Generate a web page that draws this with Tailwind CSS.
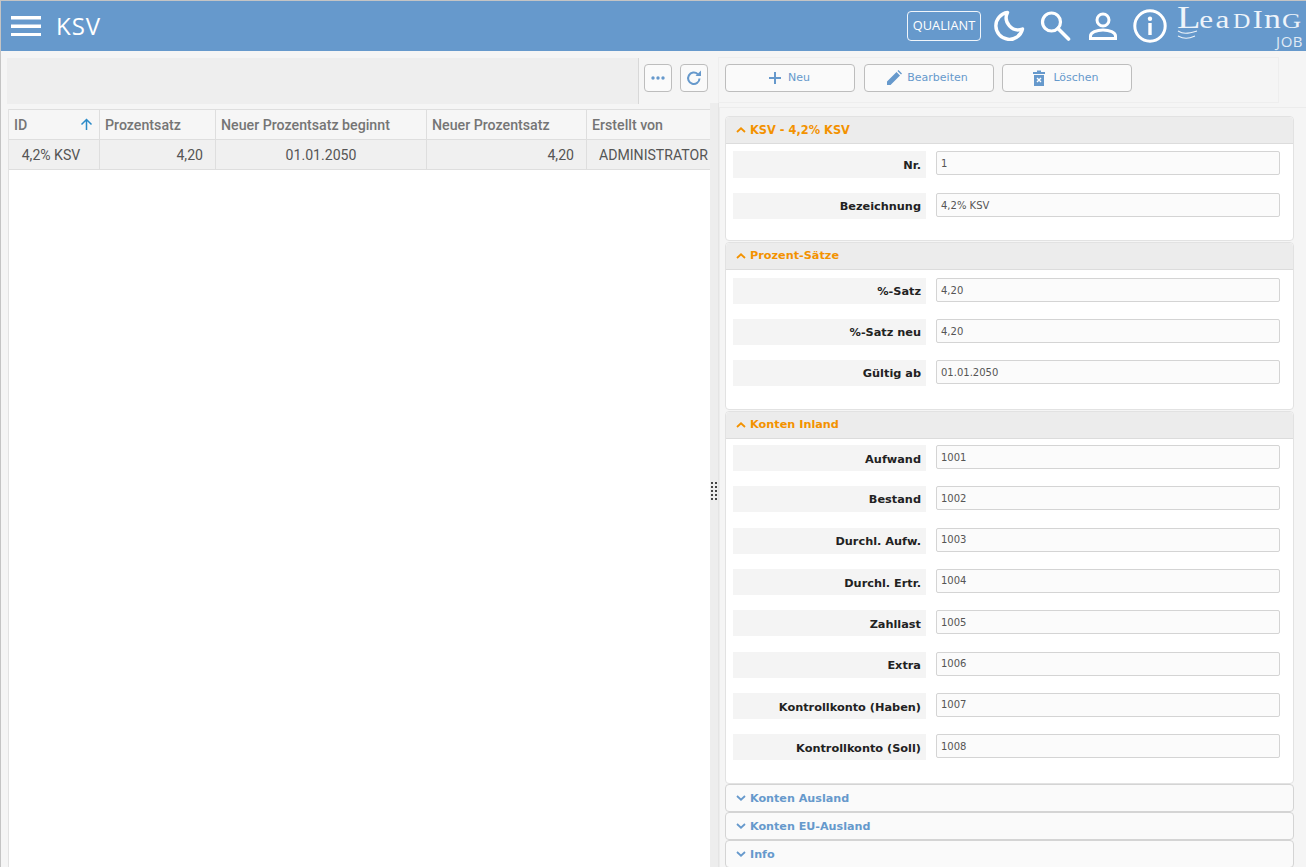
<!DOCTYPE html>
<html lang="de">
<head>
<meta charset="utf-8">
<title>KSV</title>
<script src="https://cdn.jsdelivr.net/npm/@tailwindcss/browser@4"></script>
</head>
<body class="m-0 overflow-hidden bg-white">
<div class="flex h-[867px] w-[1306px] flex-col overflow-hidden border-t border-l border-[#c4c4c4] bg-[#f5f5f5] font-['Roboto',sans-serif]">
  <!-- Header -->
  <header class="flex h-[50px] shrink-0 items-center bg-[#6699cc] text-white">
    <svg class="ml-[10px] shrink-0" width="30" height="20" viewBox="0 0 30 20"><path d="M0 0h30v3.400H0zM0 8.500h30v3.400H0zM0 17h30v3.400H0z" fill="#fff"/></svg>
    <span class="ml-[15px] font-['Open_Sans',sans-serif] text-[24px] leading-none tracking-[1px]">KSV</span>
    <div class="ml-auto flex items-center">
      <div class="flex h-[30px] w-[74px] items-center justify-center rounded-[4px] border border-white/90 font-['Open_Sans',sans-serif] text-[12.800px] font-medium">QUALIANT</div>
      <svg class="ml-[12px]" width="32" height="32" viewBox="0 0 32 32"><path d="M14.500 2.500A13.500 13.500 0 1 0 29.500 19 12 12 0 0 1 14.500 2.500Z" fill="none" stroke="#fff" stroke-width="3.400" stroke-linejoin="round"/></svg>
      <svg class="ml-[14px]" width="32" height="32" viewBox="0 0 32 32"><circle cx="12.500" cy="12" r="9" fill="none" stroke="#fff" stroke-width="3.200"/><path d="M19 18.500 29.500 29" stroke="#fff" stroke-width="3.600" stroke-linecap="round"/></svg>
      <svg class="ml-[17px]" width="30" height="32" viewBox="0 0 30 32"><circle cx="15" cy="10" r="6" fill="none" stroke="#fff" stroke-width="3"/><path d="M2.500 28.500v-2.500c0-3.500 6-6 12.500-6s12.500 2.500 12.500 6v2.500Z" fill="none" stroke="#fff" stroke-width="3"/></svg>
      <svg class="ml-[14px]" width="36" height="36" viewBox="0 0 36 36"><circle cx="18" cy="18" r="15.200" fill="none" stroke="#fff" stroke-width="3"/><circle cx="18" cy="10.800" r="2.200" fill="#fff"/><rect x="16.300" y="15" width="3.400" height="12" fill="#fff"/></svg>
      <div class="relative ml-[9px] h-[44px] w-[127px] font-['Liberation_Serif',serif] text-[#eef4fa]">
        <div class="absolute left-0 top-[-5px] flex h-[36px] origin-left scale-x-[1.2] items-baseline whitespace-nowrap leading-[36px]">
          <span class="text-[32px]">L</span><span class="-ml-[1px] text-[26px]">e</span><span class="ml-[2px] text-[26px]">a</span><span class="ml-[3px] text-[20px]">D</span><span class="ml-[2px] text-[25px]">I</span><span class="ml-[1px] text-[28px]">n</span><span class="ml-[1px] text-[22px]">G</span>
        </div>
        <svg class="absolute left-0 top-[25px]" width="22" height="11" viewBox="0 0 22 11"><path d="M1 2c5 3 9 3 19 0M1 7c6 3 10 3 17 0" fill="none" stroke="#eef4fa" stroke-width="1.100"/></svg>
        <span class="absolute right-[1px] top-[33px] h-[8px] font-['Open_Sans',sans-serif] text-[15px] leading-[8px] tracking-[0.5px] opacity-90">JOB</span>
      </div>
      <div class="w-[2px]"></div>
    </div>
  </header>

  <div class="flex min-h-0 flex-1">
    <!-- Left pane -->
    <section class="flex w-[709px] shrink-0 flex-col pl-[6px] pt-[7px]">
      <div class="flex h-[46px] w-[703px] shrink-0">
        <div class="w-[632px] border-r border-[#d8d8d8] bg-[#eeeeee]"></div>
        <div class="flex w-[71px] items-start gap-[8px] bg-[#f5f5f5] pl-[5px] pt-[6px]">
          <button class="flex h-[28px] w-[28px] items-center justify-center rounded-[4px] border border-[#bdbdbd] bg-[#fafafa]">
            <svg width="14" height="4" viewBox="0 0 14 4"><circle cx="2" cy="2" r="1.700" fill="#6699cc"/><circle cx="7" cy="2" r="1.700" fill="#6699cc"/><circle cx="12" cy="2" r="1.700" fill="#6699cc"/></svg>
          </button>
          <button class="flex h-[28px] w-[28px] items-center justify-center rounded-[4px] border border-[#bdbdbd] bg-[#fafafa]">
            <svg width="16" height="16" viewBox="0 0 16 16"><path d="M13.500 8.500a5.700 5.700 0 1 1-1.700-4.300" fill="none" stroke="#6699cc" stroke-width="2"/><path d="M9.500 6h5.500V.5Z" fill="#6699cc"/></svg>
          </button>
        </div>
      </div>
      <div class="mt-[5px] ml-[1px] flex-1 overflow-hidden border-l border-[#e2e2e2] bg-white text-[14.100px]">
        <div class="flex h-[31px] border-y border-[#dedede] bg-[#f6f6f6] text-[14.200px] font-medium text-[#757575]">
          <div class="flex w-[91px] shrink-0 items-center justify-between border-r border-[#dedede] pl-[5px] pr-[6px] pt-[2px]">
            <span>ID</span>
            <svg class="-mt-[2px]" width="13" height="13" viewBox="0 0 13 13"><path d="M6.500 12V1.500M1.500 6.500l5-5 5 5" fill="none" stroke="#2a8ac8" stroke-width="1.500"/></svg>
          </div>
          <div class="flex w-[116px] shrink-0 items-center border-r border-[#dedede] pl-[5px] pt-[2px]">Prozentsatz</div>
          <div class="flex w-[211px] shrink-0 items-center border-r border-[#dedede] pl-[5px] pt-[2px]">Neuer Prozentsatz beginnt</div>
          <div class="flex w-[160px] shrink-0 items-center border-r border-[#dedede] pl-[5px] pt-[2px]">Neuer Prozentsatz</div>
          <div class="flex flex-1 items-center pl-[5px] pt-[2px]">Erstellt von</div>
        </div>
        <div class="flex h-[30px] border-b border-[#dedede] bg-[#f0f0f0] text-[#555555]">
          <div class="flex w-[91px] shrink-0 items-center justify-center border-r border-[#dedede] pr-[6px] pt-[2px]">4,2% KSV</div>
          <div class="flex w-[116px] shrink-0 items-center justify-end border-r border-[#dedede] pr-[12px] pt-[2px]">4,20</div>
          <div class="flex w-[211px] shrink-0 items-center justify-center border-r border-[#dedede] pt-[2px]">01.01.2050</div>
          <div class="flex w-[160px] shrink-0 items-center justify-end border-r border-[#dedede] pr-[12px] pt-[2px]">4,20</div>
          <div class="flex flex-1 items-center overflow-hidden whitespace-nowrap pl-[12px] pt-[2px]">ADMINISTRATOR</div>
        </div>
      </div>
    </section>

    <!-- Splitter -->
    <div class="mt-[52px] flex w-[9px] shrink-0 items-center justify-center border-r border-[#e4e4e4] bg-[#ededed]">
      <svg class="mt-[12px] ml-[1px]" width="7" height="19" viewBox="0 0 7 19"><path d="M0 0h2v2H0zM4 0h2v2H4zM0 4h2v2H0zM4 4h2v2H4zM0 8h2v2H0zM4 8h2v2H4zM0 12h2v2H0zM4 12h2v2H4zM0 16h2v2H0zM4 16h2v2H4z" fill="#444"/></svg>
    </div>

    <!-- Right pane -->
    <section class="-ml-[1px] flex min-w-0 flex-1 flex-col pt-[6px] font-['DejaVu_Sans',sans-serif]">
      <div class="flex h-[46px] w-[561px] shrink-0 items-start gap-[9px] border border-[#eeeeee] pl-[6px] pt-[6px] text-[11px] text-[#6699cc]">
        <button class="flex h-[28px] w-[130px] items-center justify-center gap-[6px] rounded-[4px] border border-[#bdbdbd] bg-[#fafafa] pr-[2px]">
          <svg width="14" height="14" viewBox="0 0 14 14"><path d="M6 1h2v5h5v2H8v5H6V8H1V6h5Z" fill="#6699cc"/></svg>
          <span class="pt-[1px]">Neu</span>
        </button>
        <button class="flex h-[28px] w-[130px] items-center justify-center gap-[5px] rounded-[4px] border border-[#bdbdbd] bg-[#fafafa] pr-[4px]">
          <svg width="16" height="16" viewBox="0 0 16 16"><path d="M1 15v-3.500L10.500 2l3.500 3.500L4.500 15ZM11.500 1l1-1 3.500 3.500-1 1Z" fill="#6699cc"/></svg>
          <span class="pt-[1px]">Bearbeiten</span>
        </button>
        <button class="-ml-[1px] flex h-[28px] w-[130px] items-center justify-center gap-[8px] rounded-[4px] border border-[#bdbdbd] bg-[#fafafa] pr-[2px]">
          <svg width="12" height="16" viewBox="0 0 12 16"><path d="M0 2h4V.5h4V2h4v2H0ZM1 5h10v11H1Z" fill="#6699cc"/><path d="m4 8 4 4M8 8l-4 4" stroke="#fff" stroke-width="1.400"/></svg>
          <span class="pt-[1px]">Löschen</span>
        </button>
      </div>

      <div class="mt-[4px] ml-[1px] flex-1 overflow-hidden border-t border-l border-[#ececec] pl-[5px] pt-[8px] text-[11.300px]">
        <!-- Panel 1 -->
        <div class="w-[569px] rounded-[4px] border border-[#e2e2e2] bg-white">
          <div class="flex h-[27px] items-center gap-[4px] rounded-t-[4px] border-b border-[#dcdcdc] bg-[#ececec] pl-[10px] text-[11.400px] font-bold text-[#f39200]">
            <svg width="10" height="6" viewBox="0 0 10 6"><path d="M1 5 5 1.300 9 5" fill="none" stroke="#f39200" stroke-width="1.800"/></svg>
            <span class="pt-[1px]">KSV - 4,2% KSV</span>
          </div>
          <div class="h-[96px] pt-[7px]">
            <div class="flex h-[27px] pl-[7px]">
              <div class="flex h-[27px] w-[193px] items-center justify-end bg-[#f4f4f4] pr-[5px] pt-[4px] font-bold text-[#222222]">Nr.</div>
              <div class="ml-[10px] flex h-[24px] w-[344px] items-center rounded-[2px] border border-[#d4d4d4] bg-[#fbfbfb] pl-[4px] text-[10px] text-[#555555]">1</div>
            </div>
            <div class="mt-[15px] flex h-[26px] pl-[7px]">
              <div class="flex h-[26px] w-[193px] items-center justify-end bg-[#f4f4f4] pr-[5px] pt-[3px] font-bold text-[#222222]">Bezeichnung</div>
              <div class="ml-[10px] flex h-[24px] w-[344px] items-center rounded-[2px] border border-[#d4d4d4] bg-[#fbfbfb] pl-[4px] text-[10px] text-[#555555]">4,2% KSV</div>
            </div>
          </div>
        </div>
        <!-- Panel 2 -->
        <div class="mt-[1px] w-[569px] rounded-[4px] border border-[#e2e2e2] bg-white">
          <div class="flex h-[27px] items-center gap-[4px] rounded-t-[4px] border-b border-[#dcdcdc] bg-[#ececec] pl-[10px] text-[11.250px] font-bold text-[#f39200]">
            <svg width="10" height="6" viewBox="0 0 10 6"><path d="M1 5 5 1.300 9 5" fill="none" stroke="#f39200" stroke-width="1.800"/></svg>
            <span class="pt-[1px]">Prozent-Sätze</span>
          </div>
          <div class="h-[139px] pt-[8px]">
            <div class="mb-[15px] flex h-[26px] pl-[7px]">
              <div class="flex h-[26px] w-[193px] items-center justify-end bg-[#f4f4f4] pr-[5px] pt-[3px] font-bold text-[#222222]">%-Satz</div>
              <div class="ml-[10px] flex h-[24px] w-[344px] items-center rounded-[2px] border border-[#d4d4d4] bg-[#fbfbfb] pl-[4px] text-[10px] text-[#555555]">4,20</div>
            </div>
            <div class="mb-[15px] flex h-[26px] pl-[7px]">
              <div class="flex h-[26px] w-[193px] items-center justify-end bg-[#f4f4f4] pr-[5px] pt-[3px] font-bold text-[#222222]">%-Satz neu</div>
              <div class="ml-[10px] flex h-[24px] w-[344px] items-center rounded-[2px] border border-[#d4d4d4] bg-[#fbfbfb] pl-[4px] text-[10px] text-[#555555]">4,20</div>
            </div>
            <div class="flex h-[26px] pl-[7px]">
              <div class="flex h-[26px] w-[193px] items-center justify-end bg-[#f4f4f4] pr-[5px] pt-[3px] font-bold text-[#222222]">Gültig ab</div>
              <div class="ml-[10px] flex h-[24px] w-[344px] items-center rounded-[2px] border border-[#d4d4d4] bg-[#fbfbfb] pl-[4px] text-[10px] text-[#555555]">01.01.2050</div>
            </div>
          </div>
        </div>
        <!-- Panel 3 -->
        <div class="mt-[1px] w-[569px] rounded-[4px] border border-[#e2e2e2] bg-white">
          <div class="flex h-[27px] items-center gap-[4px] rounded-t-[4px] border-b border-[#dcdcdc] bg-[#ececec] pl-[10px] text-[11.250px] font-bold text-[#f39200]">
            <svg width="10" height="6" viewBox="0 0 10 6"><path d="M1 5 5 1.300 9 5" fill="none" stroke="#f39200" stroke-width="1.800"/></svg>
            <span class="pt-[1px]">Konten Inland</span>
          </div>
          <div class="h-[344px] pt-[6px]">
            <div class="mb-[15.330px] flex h-[26px] pl-[7px]">
              <div class="flex h-[26px] w-[193px] items-center justify-end bg-[#f4f4f4] pr-[5px] pt-[4px] font-bold text-[#222222]">Aufwand</div>
              <div class="ml-[10px] flex h-[24px] w-[344px] items-center rounded-[2px] border border-[#d4d4d4] bg-[#fbfbfb] pl-[4px] text-[10px] text-[#555555]">1001</div>
            </div>
            <div class="mb-[15.330px] flex h-[26px] pl-[7px]">
              <div class="flex h-[26px] w-[193px] items-center justify-end bg-[#f4f4f4] pr-[5px] pt-[3px] font-bold text-[#222222]">Bestand</div>
              <div class="ml-[10px] flex h-[24px] w-[344px] items-center rounded-[2px] border border-[#d4d4d4] bg-[#fbfbfb] pl-[4px] text-[10px] text-[#555555]">1002</div>
            </div>
            <div class="mb-[15.330px] flex h-[26px] pl-[7px]">
              <div class="flex h-[26px] w-[193px] items-center justify-end bg-[#f4f4f4] pr-[5px] pt-[4px] font-bold text-[#222222]">Durchl. Aufw.</div>
              <div class="ml-[10px] flex h-[24px] w-[344px] items-center rounded-[2px] border border-[#d4d4d4] bg-[#fbfbfb] pl-[4px] text-[10px] text-[#555555]">1003</div>
            </div>
            <div class="mb-[15.330px] flex h-[26px] pl-[7px]">
              <div class="flex h-[26px] w-[193px] items-center justify-end bg-[#f4f4f4] pr-[5px] pt-[4px] font-bold text-[#222222]">Durchl. Ertr.</div>
              <div class="ml-[10px] flex h-[24px] w-[344px] items-center rounded-[2px] border border-[#d4d4d4] bg-[#fbfbfb] pl-[4px] text-[10px] text-[#555555]">1004</div>
            </div>
            <div class="mb-[15.330px] flex h-[26px] pl-[7px]">
              <div class="flex h-[26px] w-[193px] items-center justify-end bg-[#f4f4f4] pr-[5px] pt-[4px] font-bold text-[#222222]">Zahllast</div>
              <div class="ml-[10px] flex h-[24px] w-[344px] items-center rounded-[2px] border border-[#d4d4d4] bg-[#fbfbfb] pl-[4px] text-[10px] text-[#555555]">1005</div>
            </div>
            <div class="mb-[15.330px] flex h-[26px] pl-[7px]">
              <div class="flex h-[26px] w-[193px] items-center justify-end bg-[#f4f4f4] pr-[5px] pt-[4px] font-bold text-[#222222]">Extra</div>
              <div class="ml-[10px] flex h-[24px] w-[344px] items-center rounded-[2px] border border-[#d4d4d4] bg-[#fbfbfb] pl-[4px] text-[10px] text-[#555555]">1006</div>
            </div>
            <div class="mb-[15.330px] flex h-[26px] pl-[7px]">
              <div class="flex h-[26px] w-[193px] items-center justify-end bg-[#f4f4f4] pr-[5px] pt-[4px] font-bold text-[#222222]">Kontrollkonto (Haben)</div>
              <div class="ml-[10px] flex h-[24px] w-[344px] items-center rounded-[2px] border border-[#d4d4d4] bg-[#fbfbfb] pl-[4px] text-[10px] text-[#555555]">1007</div>
            </div>
            <div class="flex h-[26px] pl-[7px]">
              <div class="flex h-[26px] w-[193px] items-center justify-end bg-[#f4f4f4] pr-[5px] pt-[4px] font-bold text-[#222222]">Kontrollkonto (Soll)</div>
              <div class="ml-[10px] flex h-[24px] w-[344px] items-center rounded-[2px] border border-[#d4d4d4] bg-[#fbfbfb] pl-[4px] text-[10px] text-[#555555]">1008</div>
            </div>
          </div>
        </div>
        <!-- Collapsed -->
        <div class="flex h-[28px] w-[569px] items-center gap-[4px] rounded-[4px] border border-[#d4d4d4] bg-[#fafafa] pl-[10px] text-[11.150px] font-bold text-[#6699cc]">
          <svg width="10" height="6" viewBox="0 0 10 6"><path d="M1 1 5 4.700 9 1" fill="none" stroke="#6699cc" stroke-width="1.800"/></svg>
          <span class="pt-[2px]">Konten Ausland</span>
        </div>
        <div class="flex h-[28px] w-[569px] items-center gap-[4px] rounded-[4px] border border-[#d4d4d4] bg-[#fafafa] pl-[10px] text-[11.150px] font-bold text-[#6699cc]">
          <svg width="10" height="6" viewBox="0 0 10 6"><path d="M1 1 5 4.700 9 1" fill="none" stroke="#6699cc" stroke-width="1.800"/></svg>
          <span class="pt-[2px]">Konten EU-Ausland</span>
        </div>
        <div class="flex h-[28px] w-[569px] items-center gap-[4px] rounded-[4px] border border-[#d4d4d4] bg-[#fafafa] pl-[10px] text-[11.150px] font-bold text-[#6699cc]">
          <svg width="10" height="6" viewBox="0 0 10 6"><path d="M1 1 5 4.700 9 1" fill="none" stroke="#6699cc" stroke-width="1.800"/></svg>
          <span class="pt-[2px]">Info</span>
        </div>
      </div>
    </section>
  </div>
</div>
</body>
</html>
